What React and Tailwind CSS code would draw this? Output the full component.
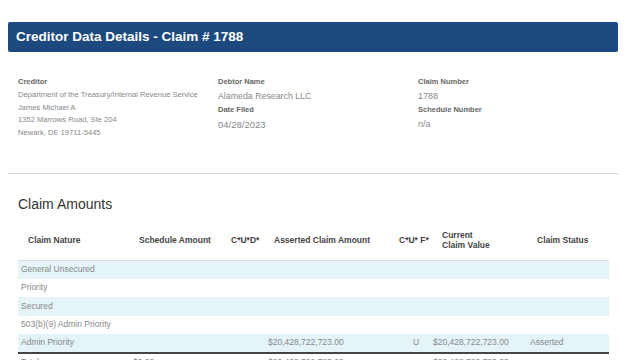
import React from 'react';

// Claim detail page: header bar, party info and the amounts table
const claim = {
  number: '1788',
  creditor: [
    'Department of the Treasury/Internal Revenue Service',
    'James Michael A',
    '1352 Marrows Road, Ste 204',
    'Newark, DE 19711-5445',
  ],
  debtor: 'Alameda Research LLC',
  filed: '04/28/2023',
  schedule: 'n/a',
};

const rows = [
  { nature: 'General Unsecured' },
  { nature: 'Priority' },
  { nature: 'Secured' },
  { nature: '503(b)(9) Admin Priority' },
  {
    nature: 'Admin Priority',
    asserted: '$20,428,722,723.00',
    cuf: 'U',
    current: '$20,428,722,723.00',
    status: 'Asserted',
  },
];

const total = {
  nature: 'Total',
  schedule: '$0.00',
  asserted: '$20,428,722,723.00',
  current: '$20,428,722,723.00',
};

function Label({ children }) {
  return <div className="text-[7.5px] font-bold text-[#666] leading-[12.75px]">{children}</div>;
}

export default function App() {
  return (
    <div className="w-[640px] h-[360px] overflow-hidden bg-white pl-2 pr-[22px] font-['Liberation_Sans',Arial,sans-serif]">
      <div className="mt-[22px] h-[30px] rounded-[2px] bg-[#1c4a7e] flex items-center px-2">
        <h1 className="text-[13.5px] font-bold text-white">Creditor Data Details - Claim # {claim.number}</h1>
      </div>

      <div className="grid grid-cols-[200px_200px_1fr] pl-[10px] pt-6 h-[121px]">
        <div>
          <Label>Creditor</Label>
          {claim.creditor.map((line) => (
            <div key={line} className="text-[7.6px] text-[#888] leading-[12.75px] whitespace-nowrap">{line}</div>
          ))}
        </div>
        <div>
          <Label>Debtor Name</Label>
          <div className="text-[8.8px] text-[#888] leading-[15px]">{claim.debtor}</div>
          <Label>Date Filed</Label>
          <div className="text-[9.5px] text-[#888] leading-[15px]">{claim.filed}</div>
        </div>
        <div>
          <Label>Claim Number</Label>
          <div className="text-[9px] text-[#888] leading-[15px]">{claim.number}</div>
          <Label>Schedule Number</Label>
          <div className="text-[9px] text-[#888] leading-[15px]">{claim.schedule}</div>
        </div>
      </div>

      <div className="border-t border-[#d8d8d8]"></div>

      <div className="px-[10px]">
        <h2 className="mt-[22px] text-[14px] text-[#333] leading-4">Claim Amounts</h2>

        <table className="mt-[8px] table-fixed border-collapse w-[591px]">
          <colgroup>
            <col className="w-[112px]" />
            <col className="w-[92px]" />
            <col className="w-[43px]" />
            <col className="w-[125px]" />
            <col className="w-[40px]" />
            <col className="w-[97px]" />
            <col className="w-[82px]" />
          </colgroup>
          <thead>
            <tr className="h-[40px] border-b border-[#dcdcdc] text-left text-[8.5px] font-bold text-[#444] leading-[10px]">
              <th className="pl-[10px]">Claim Nature</th>
              <th className="pl-[9px]">Schedule Amount</th>
              <th className="pl-[9px] whitespace-nowrap">C*U*D*</th>
              <th className="pl-[9px]">Asserted Claim Amount</th>
              <th className="pl-[9px] whitespace-nowrap">C*U* F*</th>
              <th className="pl-[12px]">Current<br />Claim Value</th>
              <th className="pl-[10px]">Claim Status</th>
            </tr>
          </thead>
          <tbody className="text-[8.5px] text-[#888]">
            {rows.map((r, i) => (
              <tr
                key={r.nature}
                className={`h-[18.5px] ${i % 2 === 0 ? 'bg-[#e4f4f9]' : 'bg-white'} ${i === rows.length - 1 ? 'border-b-2 border-[#444]' : ''}`}
              >
                <td className="pl-[3px] whitespace-nowrap">{r.nature}</td>
                <td className="pl-[3px]">{r.schedule}</td>
                <td></td>
                <td className="pl-[3px]">{r.asserted}</td>
                <td className="pl-[23px]">{r.cuf}</td>
                <td className="pl-[3px] whitespace-nowrap">{r.current}</td>
                <td className="pl-[3px]">{r.status}</td>
              </tr>
            ))}
            <tr className="h-[18.5px]">
              <td className="pl-[3px]">{total.nature}</td>
              <td className="pl-[3px]">{total.schedule}</td>
              <td></td>
              <td className="pl-[3px]">{total.asserted}</td>
              <td></td>
              <td className="pl-[3px] whitespace-nowrap">{total.current}</td>
              <td></td>
            </tr>
          </tbody>
        </table>
      </div>
    </div>
  );
}
